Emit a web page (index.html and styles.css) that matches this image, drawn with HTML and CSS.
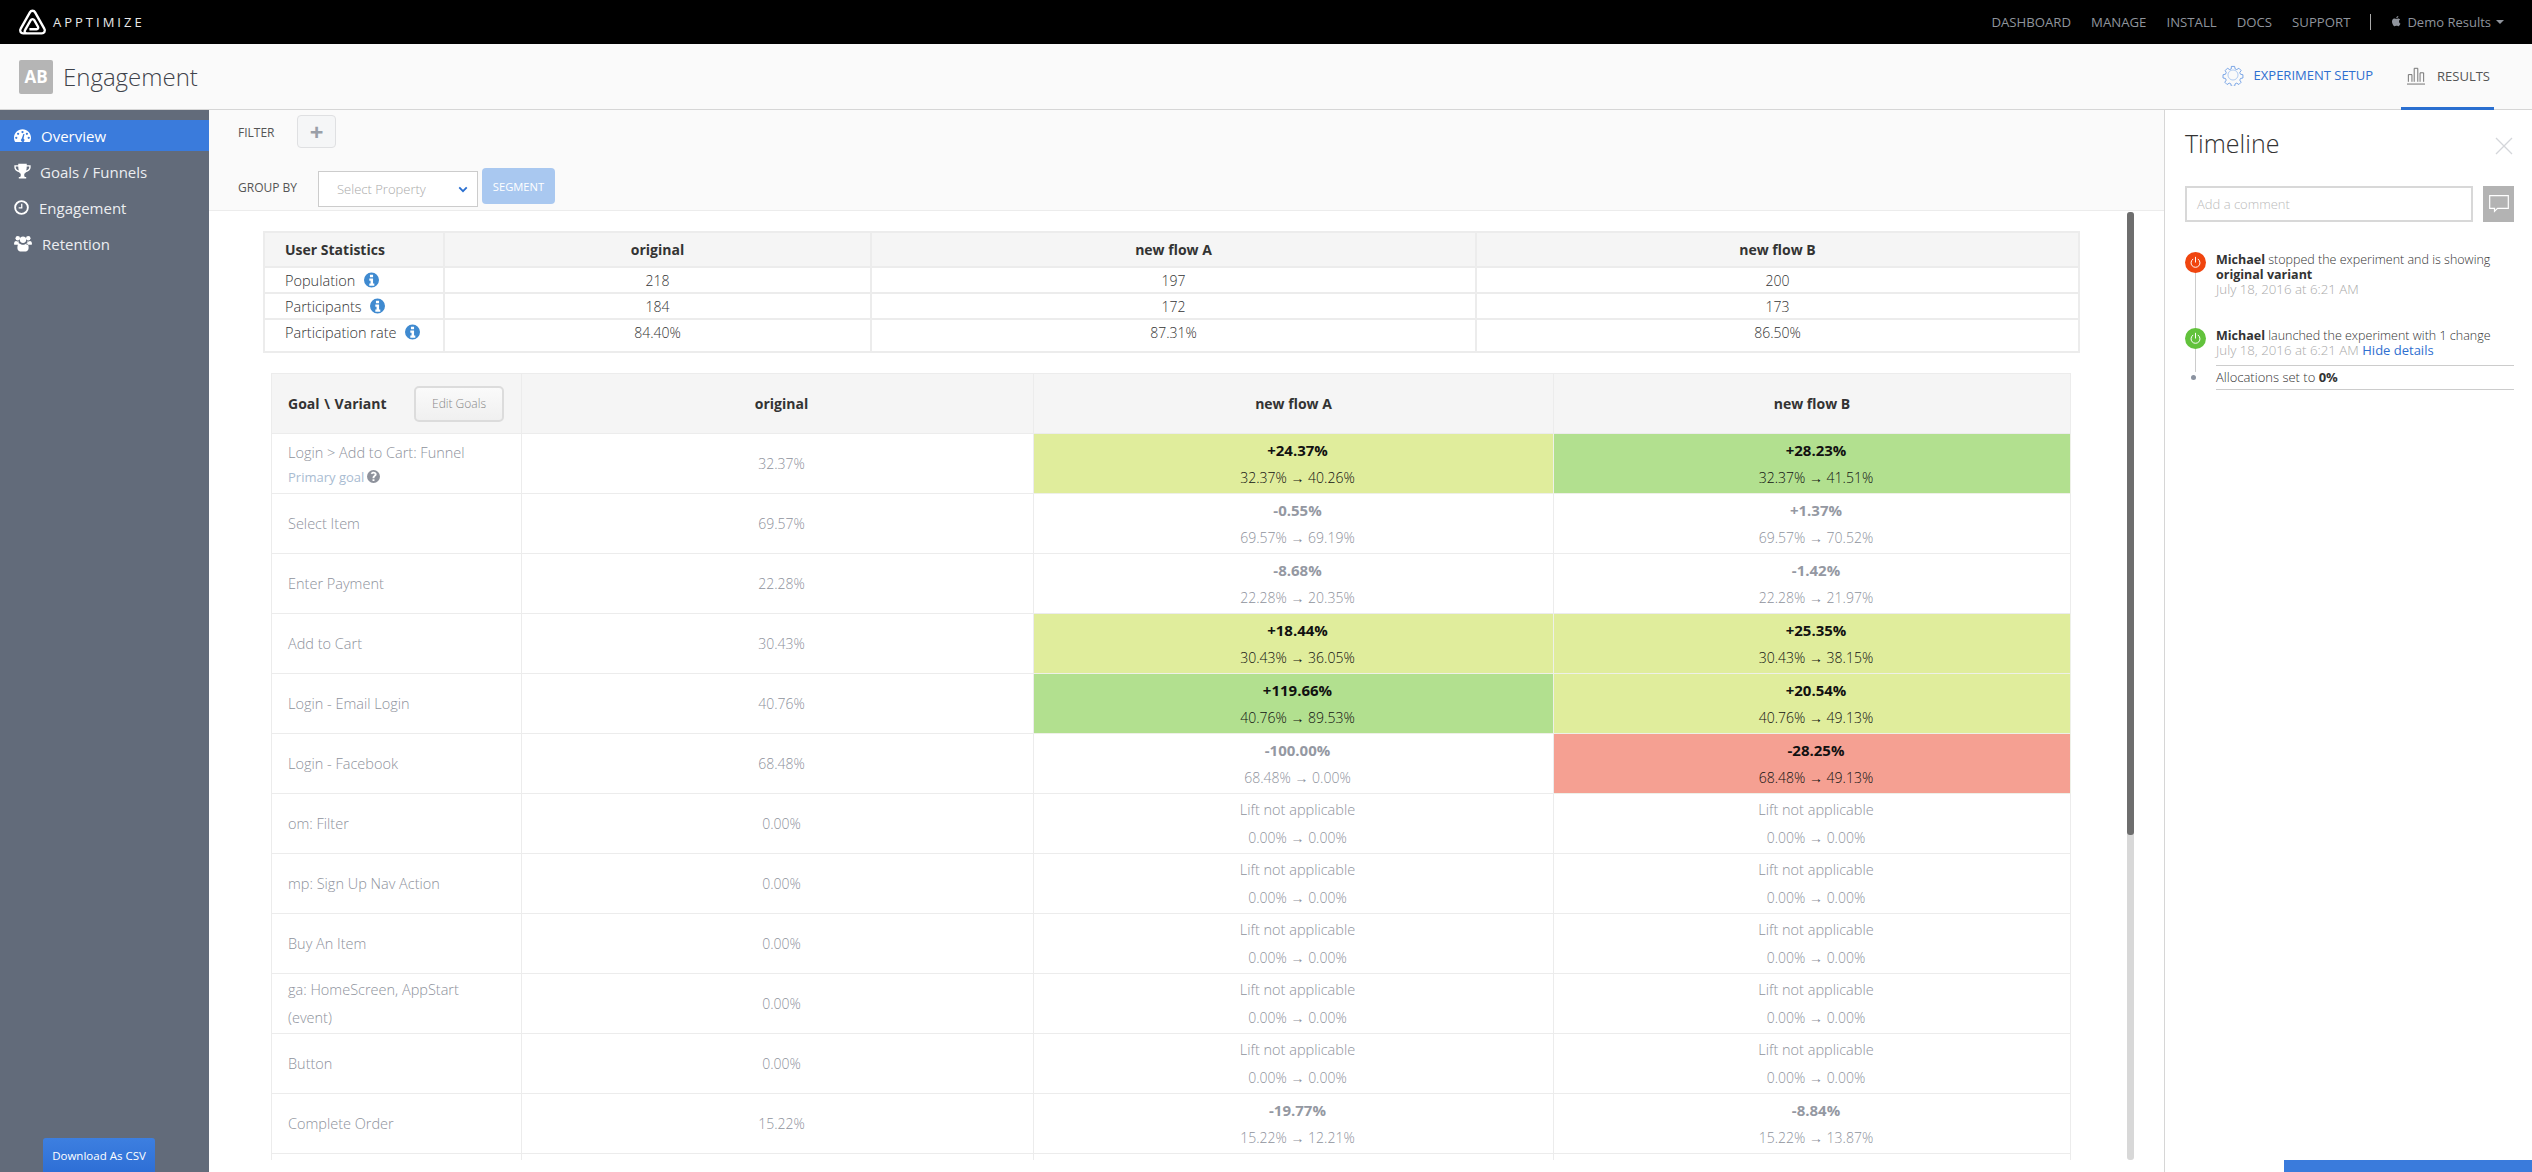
FILE: index.html
```html
<!DOCTYPE html>
<html lang="en">
<head>
<meta charset="utf-8">
<title>Apptimize - Engagement</title>
<link rel="stylesheet" href="styles.css">
</head>
<body>
<svg class="defs" aria-hidden="true">
  <symbol id="i-info" viewBox="0 0 24 24"><path fill-rule="evenodd" d="M12 0a12 12 0 1 0 0 24a12 12 0 0 0 0-24zM9.500 3.500h5v4h-5zM8.500 9.500h6v8h2v3.500h-8v-3.500h2v-4.500h-2z"/></symbol>
  <symbol id="i-power" viewBox="0 0 20 20"><path d="M6.500 5.500a6 6 0 1 0 7 0M10 3v6.500" fill="none" stroke="currentColor" stroke-width="1.300" stroke-linecap="round"/></symbol>
</svg>

<header class="topbar">
  <a class="brand">
    <svg class="brand-logo" viewBox="0 0 28 27"><path d="M8 24.500H5c-2.300 0-3.700-2.400-2.500-4.400l9-15.900c1.100-2 3.900-2 5 0l9 15.900c1.200 2-.2 4.400-2.500 4.400H8.500c-1.800 0-2.600-1.800-1.700-3.200l5.500-9.600c.8-1.300 2.600-1.300 3.400 0l3.600 6.400c.6 1.100-.1 2.400-1.300 2.400H11" fill="none" stroke="#fff" stroke-width="2.300"/></svg>
    <span class="brand-name">APPTIMIZE</span>
  </a>
  <nav class="topnav">
    <a>DASHBOARD</a><a>MANAGE</a><a>INSTALL</a><a>DOCS</a><a>SUPPORT</a>
    <span class="topnav-sep"></span>
    <span class="account">
      <svg class="apple" viewBox="0 0 20 24"><path d="M14.600 12.700c0-2.300 1.900-3.400 2-3.500-1.100-1.600-2.800-1.800-3.400-1.800-1.400-.1-2.800.9-3.500.9s-1.900-.9-3.100-.9C4.900 7.400 3.400 8.300 2.600 9.700c-1.700 2.900-.4 7.200 1.200 9.500.8 1.200 1.800 2.400 3 2.400s1.700-.8 3.100-.8 1.900.8 3.100.8c1.300 0 2.100-1.200 2.900-2.300.9-1.300 1.300-2.600 1.300-2.700-.1 0-2.600-1-2.600-3.900zM12.300 5.700c.6-.8 1.100-1.900 1-3-1 0-2.100.6-2.800 1.400-.6.700-1.100 1.800-1 2.900 1.100.1 2.200-.5 2.800-1.300z" fill="#8f949c"/></svg>
      Demo Results
      <span class="caret"></span>
    </span>
  </nav>
</header>

<section class="titlebar">
  <div class="title">
    <span class="ab">AB</span>
    <h1>Engagement</h1>
  </div>
  <div class="tabs">
    <a class="tab tab-setup">
      <svg class="tab-gear" viewBox="0 0 24 24" fill="none" stroke="#5e93e2" stroke-width="1"><path d="M10 1.500h4l.6 3 2 .9 2.600-1.700 2.800 2.800-1.700 2.600.9 2 3 .6v4l-3 .6-.9 2 1.700 2.600-2.800 2.800-2.600-1.700-2 .9-.6 3h-4l-.6-3-2-.9-2.600 1.700-2.800-2.800 1.700-2.600-.9-2-3-.6v-4l3-.6.9-2L2.500 6.500l2.800-2.800 2.600 1.700 2-.9z" transform="translate(1.300 1.300) scale(.89)"/><circle cx="12" cy="12" r="5.500" stroke="#a9c6f0"/></svg>
      EXPERIMENT SETUP
    </a>
    <a class="tab tab-results">
      <svg class="tab-bars" viewBox="0 0 20 20" fill="none" stroke="#666" stroke-width="1"><path d="M0 19.500h20M1.500 17V9h4v8M8 17V2h4v15M14.500 17V7h4v10"/></svg>
      RESULTS
    </a>
  </div>
</section>

<main class="layout">
  <aside class="sidebar">
    <nav class="sidenav">
      <a class="sideitem active">
        <svg class="side-icon" viewBox="0 0 24 20"><path fill-rule="evenodd" d="M12 1C5.400 1 0 6.300 0 13c0 2.400.7 4.500 1.800 6.300h20.400C23.300 17.500 24 15.400 24 13 24 6.300 18.600 1 12 1zM12 3.500a1.600 1.600 0 1 1 0 3.200 1.600 1.600 0 0 1 0-3.200zM5.800 6a1.600 1.600 0 1 1 0 3.200 1.600 1.600 0 0 1 0-3.200zM18.200 6a1.600 1.600 0 1 1 0 3.200 1.600 1.600 0 0 1 0-3.200zM3.200 11.600a1.600 1.600 0 1 1 0 3.200 1.600 1.600 0 0 1 0-3.200zM20.800 11.600a1.600 1.600 0 1 1 0 3.200 1.600 1.600 0 0 1 0-3.200zM14.800 8l-1.300 6.300a2.500 2.500 0 1 1-2.700.2L13.200 8z" fill="#fff"/></svg>
        <span class="side-label">Overview</span>
      </a>
      <a class="sideitem goals">
        <svg class="side-icon" viewBox="0 0 24 24"><path fill-rule="evenodd" d="M6 1h12v2h5.500v3.500c0 3-3 6-6.700 6.500-.7 1-1.500 1.700-2.300 2.200V18c0 1 .8 1.800 2 1.800h.7V22H6.800v-2.200h.7c1.200 0 2-.8 2-1.800v-2.800c-.8-.5-1.600-1.200-2.300-2.200C3.500 12.500.5 9.500.5 6.500V3H6zM2.500 5v1.500c0 1.600 1.700 3.500 4.300 4.200-.5-1.500-.8-3.400-.8-5.700zM21.500 5H18c0 2.300-.3 4.200-.8 5.700 2.600-.7 4.300-2.600 4.300-4.200z" fill="#fff"/></svg>
        <span class="side-label">Goals / Funnels</span>
      </a>
      <a class="sideitem engage">
        <svg class="side-icon" viewBox="0 0 24 24"><circle cx="12" cy="12" r="10.200" fill="none" stroke="#fff" stroke-width="3"/><path d="M13.400 6v7.500H7.500v-2h3.900V6z" fill="#fff"/></svg>
        <span class="side-label">Engagement</span>
      </a>
      <a class="sideitem retain">
        <svg class="side-icon" viewBox="0 0 24 22"><g fill="#fff"><circle cx="5" cy="4" r="3"/><circle cx="19" cy="4" r="3"/><circle cx="12" cy="6" r="4.200"/><path d="M0 12c0-3 1-4.500 3-4.500 1 .7 2 .9 3.200.6-.3 2 .5 3.500 1.500 4.400H1c-.6 0-1-.2-1-.5zM24 12c0-3-1-4.500-3-4.500-1 .7-2 .9-3.200.6.3 2-.5 3.500-1.500 4.400H23c.6 0 1-.2 1-.5zM7.500 11c1.300 1.200 3 1.800 4.500 1.800s3.200-.6 4.500-1.800c2 .2 3 2.200 3 5.800 0 3-1.500 4.700-3.500 4.700H8c-2 0-3.500-1.700-3.500-4.700 0-3.600 1-5.600 3-5.800z"/></g></svg>
        <span class="side-label">Retention</span>
      </a>
    </nav>
    <a class="csv">Download As CSV</a>
  </aside>

  <div class="center">
    <div class="controls">
      <div class="control-row filter-row">
        <span class="control-label filter-label">FILTER</span>
        <button class="plus" type="button">+</button>
      </div>
      <div class="control-row group-row">
        <span class="control-label group-label">GROUP BY</span>
        <div class="select">
          <span>Select Property</span>
          <svg class="chevron" viewBox="0 0 12 8"><path d="M1.500 1.500L6 6l4.500-4.500" fill="none" stroke="#2a6fd0" stroke-width="2.200"/></svg>
        </div>
        <button class="segment" type="button">SEGMENT</button>
      </div>
    </div>

    <div class="scroller">
      <div class="scrollbar"><div class="scrollthumb"></div></div>

      <table class="stats">
        <colgroup><col class="s1"><col class="s2"><col class="s3"><col class="s4"></colgroup>
        <thead>
          <tr><th class="left">User Statistics</th><th>original</th><th>new flow A</th><th>new flow B</th></tr>
        </thead>
        <tbody>
          <tr class="r1"><td class="left">Population <svg class="info"><use href="#i-info"/></svg></td><td>218</td><td>197</td><td>200</td></tr>
          <tr class="r1"><td class="left">Participants <svg class="info"><use href="#i-info"/></svg></td><td>184</td><td>172</td><td>173</td></tr>
          <tr class="r2"><td class="left">Participation rate <svg class="info"><use href="#i-info"/></svg></td><td>84.40%</td><td>87.31%</td><td>86.50%</td></tr>
        </tbody>
      </table>

      <table class="goals-table">
        <colgroup><col class="g1"><col class="g2"><col class="g3"><col class="g4"></colgroup>
        <thead>
          <tr>
            <th class="goalhead"><div class="goalhead-in"><span>Goal \ Variant</span><button class="edit" type="button">Edit Goals</button></div></th>
            <th class="orig">original</th><th>new flow A</th><th>new flow B</th>
          </tr>
        </thead>
        <tbody>
          <tr>
            <td class="name name-primary">Login &gt; Add to Cart: Funnel<div class="primary">Primary goal <svg class="help" viewBox="0 0 24 24"><path fill-rule="evenodd" d="M12 0a12 12 0 1 0 0 24 12 12 0 0 0 0-24zM13.800 20.500h-3.600V17h3.600zM16.500 11.200c-1 1-2.700 1.500-2.700 3.800h-3.600c0-3.500 1.500-4.400 2.800-5.300.8-.6 1.200-1 1.200-1.800 0-1-.9-1.600-2.100-1.600-1.300 0-2.200.7-2.900 1.700L6.800 6c1.100-1.700 3-2.800 5.300-2.800 3 0 5.700 1.800 5.700 4.700 0 1.500-.6 2.500-1.300 3.300z"/></svg></div></td>
            <td class="base">32.37%</td>
            <td class="cell hi-y"><b>+24.37%</b><span>32.37% → 40.26%</span></td>
            <td class="cell hi-g"><b>+28.23%</b><span>32.37% → 41.51%</span></td>
          </tr>
          <tr>
            <td class="name">Select Item</td><td class="base">69.57%</td>
            <td class="cell"><b>-0.55%</b><span>69.57% → 69.19%</span></td>
            <td class="cell"><b>+1.37%</b><span>69.57% → 70.52%</span></td>
          </tr>
          <tr>
            <td class="name">Enter Payment</td><td class="base">22.28%</td>
            <td class="cell"><b>-8.68%</b><span>22.28% → 20.35%</span></td>
            <td class="cell"><b>-1.42%</b><span>22.28% → 21.97%</span></td>
          </tr>
          <tr>
            <td class="name">Add to Cart</td><td class="base">30.43%</td>
            <td class="cell hi-y"><b>+18.44%</b><span>30.43% → 36.05%</span></td>
            <td class="cell hi-y"><b>+25.35%</b><span>30.43% → 38.15%</span></td>
          </tr>
          <tr>
            <td class="name">Login - Email Login</td><td class="base">40.76%</td>
            <td class="cell hi-g"><b>+119.66%</b><span>40.76% → 89.53%</span></td>
            <td class="cell hi-y"><b>+20.54%</b><span>40.76% → 49.13%</span></td>
          </tr>
          <tr>
            <td class="name">Login - Facebook</td><td class="base">68.48%</td>
            <td class="cell"><b>-100.00%</b><span>68.48% → 0.00%</span></td>
            <td class="cell hi-r"><b>-28.25%</b><span>68.48% → 49.13%</span></td>
          </tr>
          <tr>
            <td class="name">om: Filter</td><td class="base">0.00%</td>
            <td class="cell na"><b>Lift not applicable</b><span>0.00% → 0.00%</span></td>
            <td class="cell na"><b>Lift not applicable</b><span>0.00% → 0.00%</span></td>
          </tr>
          <tr>
            <td class="name">mp: Sign Up Nav Action</td><td class="base">0.00%</td>
            <td class="cell na"><b>Lift not applicable</b><span>0.00% → 0.00%</span></td>
            <td class="cell na"><b>Lift not applicable</b><span>0.00% → 0.00%</span></td>
          </tr>
          <tr>
            <td class="name">Buy An Item</td><td class="base">0.00%</td>
            <td class="cell na"><b>Lift not applicable</b><span>0.00% → 0.00%</span></td>
            <td class="cell na"><b>Lift not applicable</b><span>0.00% → 0.00%</span></td>
          </tr>
          <tr>
            <td class="name">ga: HomeScreen, AppStart (event)</td><td class="base">0.00%</td>
            <td class="cell na"><b>Lift not applicable</b><span>0.00% → 0.00%</span></td>
            <td class="cell na"><b>Lift not applicable</b><span>0.00% → 0.00%</span></td>
          </tr>
          <tr>
            <td class="name">Button</td><td class="base">0.00%</td>
            <td class="cell na"><b>Lift not applicable</b><span>0.00% → 0.00%</span></td>
            <td class="cell na"><b>Lift not applicable</b><span>0.00% → 0.00%</span></td>
          </tr>
          <tr>
            <td class="name">Complete Order</td><td class="base">15.22%</td>
            <td class="cell"><b>-19.77%</b><span>15.22% → 12.21%</span></td>
            <td class="cell"><b>-8.84%</b><span>15.22% → 13.87%</span></td>
          </tr>
          <tr><td></td><td></td><td></td><td></td></tr>
        </tbody>
      </table>
    </div>
  </div>

  <aside class="timeline">
    <div class="timeline-head">
      <h2>Timeline</h2>
      <svg class="close" viewBox="0 0 18 18"><path d="M1 1l16 16M17 1L1 17" fill="none" stroke="#d4d6da" stroke-width="1.300"/></svg>
    </div>
    <div class="comment">
      <div class="comment-input">Add a comment</div>
      <button class="comment-btn" type="button"><svg viewBox="0 0 20 18"><path d="M.7.7h18.600v12.600H8.500l-3 3v-3H.7z" fill="none" stroke="#fff" stroke-width="1.200"/></svg></button>
    </div>
    <div class="events">
      <div class="connector"></div>
      <div class="event event-stop">
        <span class="dot dot-red"><svg><use href="#i-power"/></svg></span>
        <div class="event-body">
          <p><strong>Michael</strong> stopped the experiment and is showing <strong>original variant</strong></p>
          <p class="when">July 18, 2016 at 6:21 AM</p>
        </div>
      </div>
      <div class="event event-launch">
        <span class="dot dot-green"><svg><use href="#i-power"/></svg></span>
        <div class="event-body">
          <p><strong>Michael</strong> launched the experiment with 1 change</p>
          <p class="when">July 18, 2016 at 6:21 AM <a class="hide">Hide details</a></p>
        </div>
      </div>
      <div class="detail">
        <span class="tiny-dot"></span>
        <p>Allocations set to <strong>0%</strong></p>
      </div>
    </div>
    <div class="feedback"></div>
  </aside>
</main>
</body>
</html>
```
FILE: styles.css
```css
* { box-sizing: border-box; }
html, body { height: 100%; }
body {
  margin: 0;
  height: 1172px;
  overflow: hidden;
  display: flex;
  flex-direction: column;
  font-family: "Open Sans", "Liberation Sans", sans-serif;
  font-size: 14px;
  color: #333;
  background: #fff;
}
.defs { position: absolute; width: 0; height: 0; }
p, h1, h2 { margin: 0; font-weight: inherit; }
button { font-family: inherit; }

/* top bar */
.topbar {
  height: 44px;
  flex: none;
  background: #000;
  display: flex;
  align-items: center;
  justify-content: space-between;
  padding: 0 28px 0 18px;
}
.brand { display: flex; align-items: center; gap: 6px; }
.brand-logo { width: 29px; height: 28px; }
.brand-name { color: #e8e8e8; font-size: 13px; letter-spacing: 3px; font-weight: 400; }
.topnav { display: flex; align-items: center; gap: 20px; font-size: 13.200px; color: #8f949c; }
.topnav-sep { width: 1px; height: 16px; background: #aaa; }
.account { display: flex; align-items: center; gap: 5px; font-size: 13px; }
.apple { width: 11px; height: 14px; margin-top: -2px; }
.caret { width: 0; height: 0; border: 4px solid transparent; border-top-color: #8f949c; border-bottom: 0; }

/* title bar */
.titlebar {
  height: 66px;
  flex: none;
  background: #fafafa;
  border-bottom: 1px solid #d6d6d6;
  display: flex;
  justify-content: space-between;
  padding: 0 38px 0 19px;
}
.title { display: flex; align-items: center; gap: 10px; }
.ab {
  width: 34px; height: 34px; border-radius: 2px;
  background: #b5b5b5; color: #fff;
  font-weight: 700; font-size: 17px;
  display: flex; align-items: center; justify-content: center;
}
.title h1 { font-size: 24px; font-weight: 300; color: #3f434b; line-height: 34px; }
.tabs { display: flex; gap: 28px; }
.tab { display: flex; align-items: center; font-size: 13px; border-bottom: 3px solid transparent; }
.tab-setup { color: #2f6fd0; gap: 10px; }
.tab-gear { width: 22px; height: 22px; }
.tab-results { color: #555; gap: 12px; padding: 0 4px 0 6px; border-bottom-color: #2a6fd0; margin-bottom: -1px; }
.tab-bars { width: 18px; height: 19px; }

/* layout */
.layout { flex: 1; display: flex; min-height: 0; }

/* sidebar */
.sidebar {
  width: 209px; flex: none;
  background: #626b7a;
  display: flex; flex-direction: column;
  padding-top: 10px;
}
.sidenav { display: flex; flex-direction: column; gap: 5px; }
.sideitem {
  height: 31px; display: flex; align-items: center;
  padding-left: 14px; color: #eceef1;
  font-size: 15px; font-weight: 400;
}
.sideitem.active { background: #3a7bdc; color: #fff; }
.side-icon { width: 17px; height: 17px; margin-right: 10px; flex: none; }
.goals .side-icon { margin-right: 9px; }
.engage .side-icon { width: 15px; margin-right: 10px; }
.retain .side-icon { width: 18px; margin-right: 10px; }
.side-label { line-height: 22px; }
.csv {
  margin: auto 0 0 43px;
  width: 112px; height: 34px;
  border-radius: 3px 3px 0 0;
  background: linear-gradient(#3d7fe0, #2e6fd6);
  color: #fff; font-size: 11.500px;
  display: flex; align-items: center; justify-content: center;
}

/* center */
.center { flex: 1; min-width: 0; display: flex; flex-direction: column; background: #fff; padding-bottom: 12px; }
.controls {
  height: 101px; flex: none;
  background: #fafafa;
  border-bottom: 1px solid #ececec;
  padding-left: 29px;
}
.control-row { display: flex; align-items: flex-start; }
.filter-row { padding-top: 5px; height: 58px; }
.control-label { font-size: 12px; color: #555; font-weight: 400; }
.filter-label { width: 59px; line-height: 35px; }
.plus {
  width: 39px; height: 33px; padding: 0;
  background: #f5f6f7; border: 1px solid #dfe0e2; border-radius: 4px;
  color: #9a9fa8; font-size: 24px; font-weight: 700; line-height: 28px;
}
.group-label { width: 80px; line-height: 40px; }
.select {
  width: 160px; height: 36px; margin-top: 3px;
  border: 1px solid #ccc; background: #fff;
  display: flex; align-items: center; justify-content: space-between;
  padding: 0 9px 0 18px;
  font-size: 13px; font-weight: 300; color: #aaa;
}
.chevron { width: 10px; height: 7px; }
.segment {
  width: 73px; height: 36px; margin-left: 4px; padding: 0;
  border: 0; border-radius: 4px;
  background: #a9c8f0; color: #fff; font-size: 11.200px;
}

.scroller { flex: 1; min-height: 0; position: relative; overflow: hidden; padding: 20px 0 0 54px; }
.scrollbar { position: absolute; top: 1px; bottom: 0; right: 30px; width: 7px; border-radius: 3px; background: #d8d8d8; }
.scrollthumb { height: 623px; background: #6e6e6e; border-radius: 3px; }

/* tables */
table { border-collapse: collapse; table-layout: fixed; text-align: center; }
th, td { border: 1px solid #ececec; padding: 0; }
th { background: #f5f5f5; font-weight: 700; font-size: 14px; color: #333; }
.left { text-align: left; padding-left: 20px; }

.stats { width: 1815px; border-width: 2px; }
.stats th, .stats td { border-width: 2px; font-weight: 400; }
.stats th { height: 35px; font-weight: 700; }
.stats td { font-weight: 300; color: #333; }
.stats td.left { font-size: 14.500px; }
.stats .r1 td { height: 26px; }
.stats .r2 td { height: 33px; padding-bottom: 7px; }
.s1 { width: 180px; }
.s2 { width: 427px; }
.s3 { width: 605px; }
.s4 { width: 603px; }
.info { width: 15px; height: 16px; fill: #3f8ad0; vertical-align: -2px; margin-left: 5px; }

.goals-table { width: 1799px; margin: 20px 0 0 8px; }
.g1 { width: 250px; }
.g2 { width: 512px; }
.g3 { width: 520px; }
.g4 { width: 517px; }
.goals-table th { height: 60px; }
.goals-table td { height: 60px; }
.goals-table th.orig { padding-left: 8px; }
.goalhead-in span { word-spacing: 1px; }
.goals-table .goalhead { text-align: left; padding: 0 17px 0 16px; }
.goalhead-in { display: flex; align-items: center; justify-content: space-between; }
.edit {
  width: 90px; height: 36px; padding: 0;
  background: linear-gradient(#fafafa, #f0f0f0);
  border: 2px solid #dcdcdc; border-radius: 5px;
  font-size: 12px; font-weight: 300; color: #888;
}
.name { text-align: left; padding: 0 40px 0 16px; color: #8e929c; font-weight: 300; font-size: 14.500px; line-height: 28px; }
.name-primary { line-height: 24px; padding-top: 2px; padding-right: 0; }
.primary { color: #a9bcd2; font-size: 13px; font-weight: 400; display: flex; align-items: center; gap: 3px; }
.help { width: 13px; height: 13px; fill: #8e929c; }
.base { color: #8e929c; font-weight: 300; padding-left: 8px; }
.cell { line-height: 28px; color: #8e929c; font-weight: 300; vertical-align: top; padding: 2px 0 0 8px; }
.cell b, .cell span { display: block; }
.cell b { font-weight: 700; font-size: 15px; color: #9498a2; }
.cell.na b { font-weight: 300; font-size: 14.500px; color: inherit; }
.hi-y, .hi-g, .hi-r { color: #111; border-color: #eef0e8; }
.hi-y b, .hi-g b, .hi-r b { color: #111; }
.hi-y { background: #e0ed9c; }
.hi-g { background: #b2e08f; }
.hi-r { background: #f5a092; }

/* timeline */
.timeline {
  width: 368px; flex: none;
  border-left: 1px solid #d6d6d6;
  padding: 0 18px 0 20px;
  position: relative;
  background: #fff;
}
.timeline-head { height: 76px; display: flex; justify-content: space-between; align-items: flex-start; padding-top: 16px; }
.timeline-head h2 { font-size: 25px; line-height: 34px; font-weight: 300; color: #333; }
.close { width: 18px; height: 18px; margin: 11px 1px 0 0; }
.comment { display: flex; justify-content: space-between; }
.comment-input {
  width: 288px; height: 36px;
  border: 2px solid #d8d8d8; background: #fff;
  padding-left: 10px; font-size: 13px; font-weight: 300; color: #bbb; line-height: 32px;
}
.comment-btn {
  width: 31px; height: 36px; padding: 0; border: 0;
  background: #b3b3b3;
  display: flex; align-items: center; justify-content: center;
}
.comment-btn svg { width: 20px; height: 18px; }
.events { position: relative; padding-top: 30px; font-size: 12.500px; line-height: 15px; font-weight: 400; }
.connector { position: absolute; left: 10px; top: 40px; height: 110px; width: 1px; background: #ccc; }
.event { display: flex; gap: 10px; position: relative; }
.event-launch { margin-top: 31px; }
.dot { width: 21px; height: 21px; border-radius: 50%; flex: none; display: flex; align-items: center; justify-content: center; color: #fff; }
.dot svg { width: 15px; height: 15px; }
.dot-red { background: #f0450f; }
.dot-green { background: #62c23c; }
.event-body { flex: 1; color: #333; font-weight: 300; }
.event-body strong, .detail strong { font-weight: 700; }
.when { color: #aaa; font-weight: 300; font-size: 13.300px; }
.hide { color: #2f6fd0; font-weight: 400; font-size: 13px; }
.detail {
  margin: 7px 0 0 31px;
  border-top: 1px solid #ccc; border-bottom: 1px solid #ccc;
  height: 25px; line-height: 23px; font-weight: 300; color: #333; font-size: 13px;
  position: relative;
}
.tiny-dot { position: absolute; left: -25px; top: 9px; width: 5px; height: 5px; border-radius: 50%; background: #8b93a0; }
.feedback { position: absolute; right: 0; bottom: 0; width: 248px; height: 12px; background: #3a7bdc; }
```
